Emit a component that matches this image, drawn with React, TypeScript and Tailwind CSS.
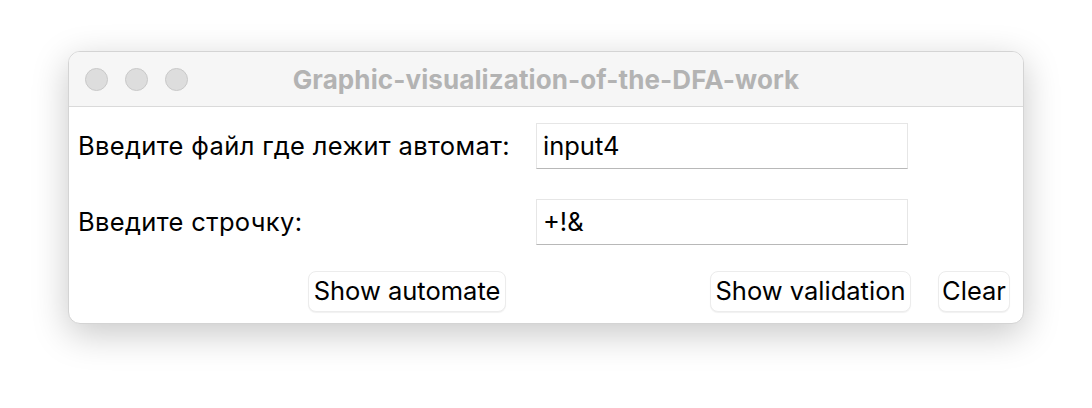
export default function App() {
  return (
    <div
      className="flex h-[408px] w-[1092px] justify-center bg-white pt-[51px]"
      style={{ fontFamily: 'Inter, "Noto Sans", sans-serif' }}
    >
      <div className="flex h-[273px] w-[956px] flex-col overflow-hidden rounded-[12px] border border-[#d4d4d4] bg-white shadow-[0_10px_36px_rgba(0,0,0,0.22)]">
        {/* title bar */}
        <div className="relative flex h-[55px] shrink-0 items-center border-b border-[#dadada] bg-[#f6f6f6]">
          <div className="flex gap-[17px] pl-[16px]">
            <span className="h-[23px] w-[23px] rounded-full border border-[#c9c9c9] bg-[#dddddd]" />
            <span className="h-[23px] w-[23px] rounded-full border border-[#c9c9c9] bg-[#dddddd]" />
            <span className="h-[23px] w-[23px] rounded-full border border-[#c9c9c9] bg-[#dddddd]" />
          </div>
          <div className="absolute inset-0 flex items-center justify-center text-[26px] font-bold tracking-[0.1px] text-[#b3b3b3]">
            Graphic-visualization-of-the-DFA-work
          </div>
        </div>

        {/* content */}
        <div className="flex flex-col pl-[9px] pt-[16px] text-[25.5px] text-black">
          <div className="flex items-center">
            <div className="w-[458px] tracking-[0.35px]">Введите файл где лежит автомат:</div>
            <div className="flex h-[46px] w-[372px] items-center border border-[#e6e6e6] border-b-[#b8b8b8] pl-[6px]">
              input4
            </div>
          </div>
          <div className="mt-[30px] flex items-center">
            <div className="w-[458px] tracking-[0.35px]">Введите строчку:</div>
            <div className="flex h-[46px] w-[372px] items-center border border-[#e6e6e6] border-b-[#b8b8b8] pl-[6px]">
              +!&amp;
            </div>
          </div>
          <div className="mt-[26px] flex items-center">
            <button className="ml-[230px] flex h-[41px] w-[198px] items-center justify-center rounded-[8px] border border-[#ececec] bg-white shadow-[0_1px_1px_rgba(0,0,0,0.06)]">
              Show automate
            </button>
            <button className="ml-[204px] flex h-[41px] w-[201px] items-center justify-center rounded-[8px] border border-[#ececec] bg-white shadow-[0_1px_1px_rgba(0,0,0,0.06)]">
              Show validation
            </button>
            <button className="ml-[27px] flex h-[41px] w-[72px] items-center justify-center rounded-[8px] border border-[#ececec] bg-white shadow-[0_1px_1px_rgba(0,0,0,0.06)]">
              Clear
            </button>
          </div>
        </div>
      </div>
    </div>
  );
}
